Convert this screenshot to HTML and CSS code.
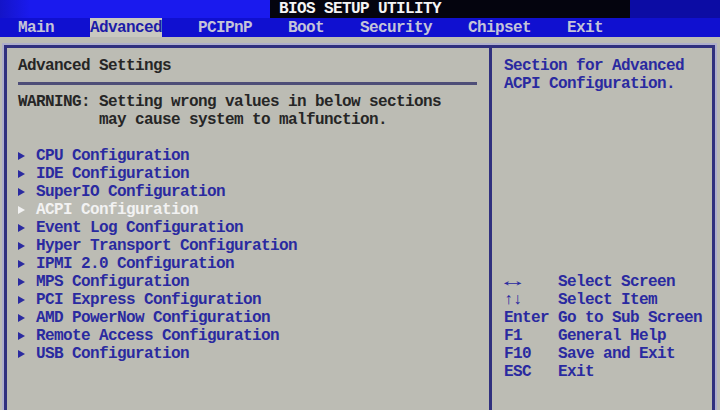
FILE: index.html
```html
<!DOCTYPE html>
<html lang="en">
<head>
<meta charset="UTF-8">
<meta name="viewport" content="width=device-width, initial-scale=1.0">
<title>BIOS Setup Utility</title>
<link rel="stylesheet" href="styles.css">
</head>
<body>

    <!-- Top title strip -->
    <div class="title-bar"><span>BIOS SETUP UTILITY</span></div>

    <!-- Main menu tabs -->
    <ul class="menu-bar">
        <li>Main</li>
        <li class="active">Advanced</li>
        <li>PCIPnP</li>
        <li>Boot</li>
        <li>Security</li>
        <li>Chipset</li>
        <li>Exit</li>
    </ul>

    <div class="frame">
        <div class="settings">
            <div class="heading">Advanced Settings</div>
            <div class="rule"></div>
            <p class="warning">WARNING: Setting wrong values in below sections
         may cause system to malfunction.</p>

            <ul class="sub-menus">
                <li>CPU Configuration</li>
                <li>IDE Configuration</li>
                <li>SuperIO Configuration</li>
                <li class="selected">ACPI Configuration</li>
                <li>Event Log Configuration</li>
                <li>Hyper Transport Configuration</li>
                <li>IPMI 2.0 Configuration</li>
                <li>MPS Configuration</li>
                <li>PCI Express Configuration</li>
                <li>AMD PowerNow Configuration</li>
                <li>Remote Access Configuration</li>
                <li>USB Configuration</li>
            </ul>
        </div>

        <div class="help">
            <p class="help-text">Section for Advanced
ACPI Configuration.</p>

            <dl class="keys">
                <dt><span class="wide-arrow">&#8596;</span></dt><dd>Select Screen</dd>
                <dt>&#8593;&#8595;</dt><dd>Select Item</dd>
                <dt>Enter</dt><dd>Go to Sub Screen</dd>
                <dt>F1</dt><dd>General Help</dd>
                <dt>F10</dt><dd>Save and Exit</dd>
                <dt>ESC</dt><dd>Exit</dd>
            </dl>
        </div>
    </div>

</body>
</html>
```

FILE: styles.css
```css
body {
    margin: 0;
    padding: 0;
    height: 100vh;
    overflow: hidden;
    background-color: #bcbcb4;
    font-family: "Liberation Mono", "DejaVu Sans Mono", monospace;
    font-size: 16px;
    letter-spacing: -0.6px; /* keeps the 9px character cell */
    font-weight: bold;
    line-height: 18px;
    display: flex;
    flex-direction: column;
}

/* Title strip: bright blue, black middle, dark blue right end */
.title-bar {
    height: 18px;
    line-height: 18px;
    text-align: center;
    color: #f4f4f4;
    background: linear-gradient(to right,
        #1414c8 0, #1a1aee 30px, #1a1aee 270px,
        #04040e 270px, #04040e 630px,
        #0c0ca4 630px, #0c0ca4 100%);
}

.menu-bar {
    list-style: none;
    margin: 0;
    padding: 0 0 0 18px;
    height: 19px;
    line-height: 20px;
    display: flex;
    gap: 36px;
    background-color: #1010d0;
    color: #c4c4d8;
}

.menu-bar li.active {
    background-color: #c8c8c0;
    color: #1c1ca8;
}

/* Double panel frame */
.frame {
    flex: 1;
    margin: 8px 5px 0 4px;
    border: 3px solid #30307e;
    border-bottom: none;
    box-shadow: 0 0 0 2px #aeaecc;
    display: grid;
    grid-template-columns: 482px 1fr;
}

.settings {
    padding: 9px 12px 0 11px;
    color: #262626;
}

.heading {
    height: 18px;
}

.rule {
    height: 18px;
    position: relative;
}

.rule::after {
    content: '';
    position: absolute;
    left: 0;
    right: 0;
    top: 7px;
    height: 3px;
    background-color: #4e4e78;
}

.warning {
    margin: 0;
    white-space: pre;
}

.sub-menus {
    list-style: none;
    margin: 18px 0 0 0;
    padding: 0;
    color: #2a2aa0;
}

.sub-menus li {
    display: flex;
    align-items: center;
}

.sub-menus li::before {
    content: '';
    width: 0;
    height: 0;
    border-left: 7px solid currentColor;
    border-top: 4px solid transparent;
    border-bottom: 4px solid transparent;
    margin: 0 11px 0 0;
}

.sub-menus li.selected {
    color: #f2f2f2;
}

.help {
    border-left: 3px solid #30307e;
    padding: 9px 0 0 12px;
    color: #2a2aa0;
}

.help-text {
    margin: 0;
    white-space: pre;
}

.keys {
    margin: 180px 0 0 0;
    display: grid;
    grid-template-columns: 54px 1fr;
}

.keys dt,
.keys dd {
    margin: 0;
    height: 18px;
}

.wide-arrow {
    display: inline-block;
    transform: scaleX(1.8);
    transform-origin: left center;
}
```
